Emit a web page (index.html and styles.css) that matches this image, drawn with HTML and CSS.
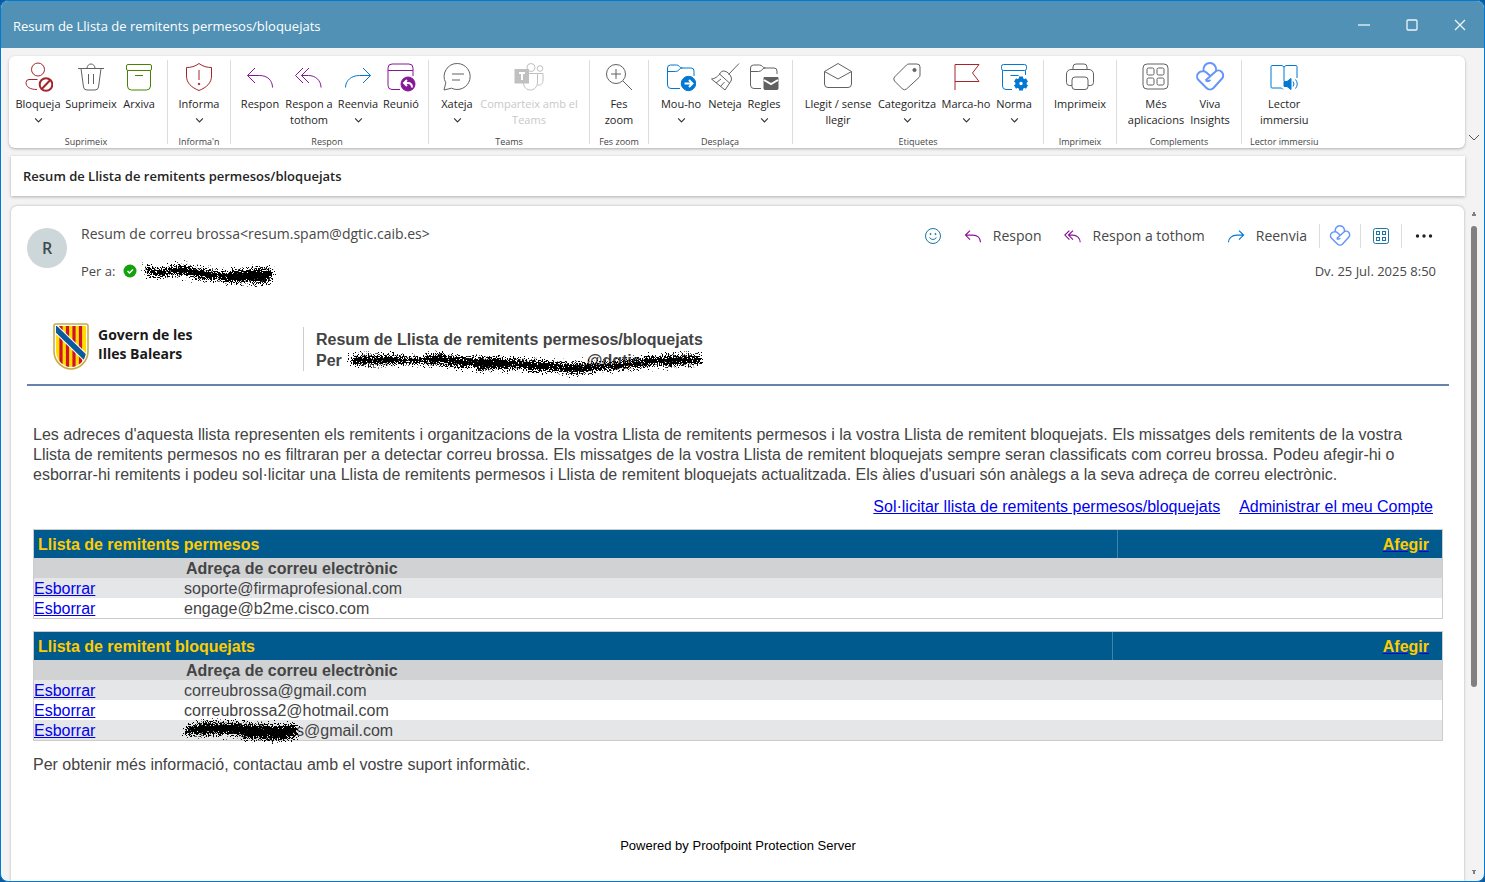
FILE: index.html
```html
<!DOCTYPE html>
<html lang="ca">
<head>
<meta charset="utf-8">
<title>Resum de Llista de remitents permesos/bloquejats</title>
<link rel="stylesheet" href="styles.css">
</head>
<body>
<svg class="defs" aria-hidden="true">
  <symbol id="chev" viewBox="0 0 8 6"><path d="M1 1.2l3 3 3-3"/></symbol>
  <symbol id="reply" viewBox="0 0 30 30"><path d="M10 6L2.500 13.500l7.500 7.500M2.500 13.500h12c8 0 13 5 13 12"/></symbol>
  <symbol id="replyall" viewBox="0 0 30 30"><path d="M9 6L1.500 13.500 9 21M15 6l-7.500 7.500L15 21M7.500 13.500h7c7 0 12.500 5 12.500 12"/></symbol>
  <symbol id="forward" viewBox="0 0 30 30"><path d="M20 6l7.500 7.500L20 21M27.500 13.500h-11c-8 0-14 5-14 12"/></symbol>
  <symbol id="viva" viewBox="0 0 30 30"><path d="M10.500 18.500L20 10a4.800 4.800 0 0 1 6.800 6.800L18.500 26a5 5 0 0 1-7 0L3.500 18a5 5 0 0 1 0-7Q5.500 8.800 9 9.300q1.500.3 3 1.700l3.500 3.300M8.800 9.300a6.300 6.300 0 1 1 12 0M10.500 18.500q2.500 1.500 5-.5"/></symbol>
  <symbol id="apps" viewBox="0 0 30 30"><rect x="2" y="2" width="25" height="25" rx="4"/><rect x="6" y="6" width="7" height="7" rx="1.500"/><rect x="16" y="6" width="7" height="7" rx="1.500"/><rect x="6" y="16" width="7" height="7" rx="1.500"/><rect x="16" y="16" width="7" height="7" rx="1.500"/></symbol>
  <filter id="speckle" x="-5%" y="-40%" width="110%" height="180%">
    <feTurbulence type="fractalNoise" baseFrequency="0.8" numOctaves="2" seed="4"/>
    <feDisplacementMap in="SourceGraphic" scale="18" xChannelSelector="R" yChannelSelector="G"/>
  </filter>
</svg>

<div class="window">
  <header class="titlebar">
    <span class="window-title">Resum de Llista de remitents permesos/bloquejats</span>
    <div class="window-controls">
      <button aria-label="Minimitza"><svg viewBox="0 0 12 12"><path d="M0 6h12"/></svg></button>
      <button aria-label="Maximitza"><svg viewBox="0 0 12 12"><rect x="1" y="1" width="10" height="10" rx="1"/></svg></button>
      <button aria-label="Tanca"><svg viewBox="0 0 12 12"><path d="M1 1l10 10M11 1L1 11"/></svg></button>
    </div>
  </header>

  <div class="ribbon-row">
    <nav class="ribbon">
      <section class="group">
        <div class="tools">
          <button class="w50"><svg class="ico red" viewBox="0 0 30 30"><circle cx="15" cy="7.500" r="6.500"/><path d="M14.500 17.500H6a3 3 0 0 0-3 3c0 4.500 4 7 11 7"/><g class="thick"><circle cx="23" cy="22.500" r="6.300"/><path d="M18.700 27l8.600-9"/></g></svg>Bloqueja<svg class="chev"><use href="#chev"/></svg></button>
          <button class="w56"><svg class="ico" viewBox="0 0 30 30"><path d="M2 6.500h26M11 6.500c0-6 8-6 8 0M5 6.500l2.500 18.500q.4 3 3.500 3h8q3 0 3.500-3L25 6.500M12.500 12v10M17.500 12v10"/></svg>Suprimeix</button>
          <button class="w40"><svg class="ico green" viewBox="0 0 30 30"><rect x="2.500" y="2.500" width="25" height="6" rx="1.500"/><path d="M3.500 8.500V24a4 4 0 0 0 4 4h15a4 4 0 0 0 4-4V8.500M11 13.500h8"/></svg>Arxiva</button>
        </div>
        <h2>Suprimeix</h2>
      </section>
      <section class="group">
        <div class="tools">
          <button class="w46"><svg class="ico red" viewBox="0 0 30 30"><path d="M15 1.500C11 4.500 7 5.500 2.500 5.500V14c0 7 5 11.500 12.500 14.500C22.500 25.500 27.500 21 27.500 14V5.500C23 5.500 19 4.500 15 1.500zM15 8v10"/><circle cx="15" cy="22" r=".8" class="fill"/></svg>Informa<svg class="chev"><use href="#chev"/></svg></button>
        </div>
        <h2>Informa'n</h2>
      </section>
      <section class="group respond">
        <div class="tools">
          <button class="w50"><svg class="ico purple"><use href="#reply"/></svg>Respon</button>
          <button class="w48"><svg class="ico purple"><use href="#replyall"/></svg>Respon a<br>tothom</button>
          <button class="w50"><svg class="ico blue"><use href="#forward"/></svg>Reenvia<svg class="chev"><use href="#chev"/></svg></button>
          <button class="w36"><svg class="ico purple" viewBox="0 0 30 30"><path d="M14 27.500H6a4 4 0 0 1-4-4V6a4 4 0 0 1 4-4h17a4 4 0 0 1 4 4v8M2 8.500h25"/><circle cx="22" cy="22" r="7" class="fill"/><path class="inv" d="M21 18l-3 3 3 3M18 21h4c3 0 4 2 4 4.500"/></svg>Reunió</button>
        </div>
        <h2>Respon</h2>
      </section>
      <section class="group">
        <div class="tools">
          <button class="w40"><svg class="ico" viewBox="0 0 30 30"><path d="M15.500 1.500a13 13 0 1 1-6 24.700L2 28l1.800-7.200A13 13 0 0 1 15.500 1.500zM10 12h12M10 18h8"/></svg>Xateja<svg class="chev"><use href="#chev"/></svg></button>
          <button class="w104" disabled><svg class="ico" viewBox="0 0 30 30"><circle cx="17" cy="5.500" r="4"/><circle cx="26" cy="6.500" r="2.800"/><path d="M15 11.500h8.500V20c0 5-3.500 8-7 8s-7-2.500-7-7M23.500 11.500h5.500V18c0 4-2.500 5.500-5.500 5"/><rect x="1" y="7.500" width="13.500" height="13.500" class="fill"/><path class="inv" d="M5 11h6M8 11v7"/></svg>Comparteix amb el<br>Teams</button>
        </div>
        <h2>Teams</h2>
      </section>
      <section class="group zoom">
        <div class="tools">
          <button class="w46"><svg class="ico" viewBox="0 0 30 30"><circle cx="12" cy="12" r="9.500"/><path d="M19 19l9 9M7 12h10M12 7v10"/></svg>Fes<br>zoom</button>
        </div>
        <h2>Fes zoom</h2>
      </section>
      <section class="group move">
        <div class="tools">
          <button class="w50"><svg class="ico blue" viewBox="0 0 30 30"><path d="M14 26.500H5a3.500 3.500 0 0 1-3.500-3.500V6A3 3 0 0 1 4.500 3h6c3 0 3 3 6 3H25a3 3 0 0 1 3 3v5M1.500 9.500h8c4 0 3-3.500 7-3.500"/><circle cx="22.500" cy="21.500" r="7.200" class="fill"/><path class="inv" d="M18.500 21.500h8M23 18l3.500 3.500L23 25"/></svg>Mou-ho<svg class="chev"><use href="#chev"/></svg></button>
          <button class="w38"><svg class="ico" viewBox="0 0 30 30"><path d="M29 1.500L18.500 12.500M11.500 9.500c4-2.500 12 4.500 9.500 9.500l-6 9L1.500 17c5-.5 7.500-4 10-7.500zM9 11.500L19.500 21M6 21l5-4M10.500 24.500l4-4.500"/></svg>Neteja</button>
          <button class="w40"><svg class="ico" viewBox="0 0 30 30"><path d="M12 26.500H5a3.500 3.500 0 0 1-3.500-3.500V6A3 3 0 0 1 4.500 3h6c3 0 3 3 6 3H25a3 3 0 0 1 3 3v3M1.500 9.500h8c4 0 3-3.500 7-3.500"/><path class="fill" d="M15 15.500h14v11a1 1 0 0 1-1 1H16a1 1 0 0 1-1-1z"/><path class="inv" d="M15 18l7 4 7-4"/></svg>Regles<svg class="chev"><use href="#chev"/></svg></button>
        </div>
        <h2>Desplaça</h2>
      </section>
      <section class="group">
        <div class="tools">
          <button class="w74"><svg class="ico" viewBox="0 0 30 30"><path d="M1.500 9.500L15 1.500l13.500 8V22a3.500 3.500 0 0 1-3.500 3.500H5A3.500 3.500 0 0 1 1.500 22zM1.500 9.500L15 17l13.500-7.500"/></svg>Llegit / sense<br>llegir</button>
          <button class="w64"><svg class="ico" viewBox="0 0 30 30"><path d="M17 2h8a3 3 0 0 1 3 3v8q0 1.500-1 2.500L14.500 27q-2 1.500-4 0l-8-8q-1.500-2 0-4L14.500 3Q15.500 2 17 2z"/><circle cx="22.500" cy="8" r="1.600" class="fill"/></svg>Categoritza<svg class="chev"><use href="#chev"/></svg></button>
          <button class="w54"><svg class="ico red" viewBox="0 0 30 30"><path d="M4 28V2.500h24L21.500 11l6.500 8.500H4"/></svg>Marca-ho<svg class="chev"><use href="#chev"/></svg></button>
          <button class="w42"><svg class="ico blue" viewBox="0 0 30 30"><rect x="2.500" y="2.500" width="25" height="6" rx="2"/><path d="M3.500 8.500V24a3.500 3.500 0 0 0 3.500 3.500h6M26.500 8.500V13M11.500 13.500h8"/><circle cx="22" cy="21.500" r="3.700" class="cog"/><path class="teeth" d="M22 14.500v2.500M22 26v2.500M16 18l2.500 1.500M25.500 23.500l2.500 1.500M16 25l2.500-1.500M25.500 19.500l2.500-1.500"/></svg>Norma<svg class="chev"><use href="#chev"/></svg></button>
        </div>
        <h2>Etiquetes</h2>
      </section>
      <section class="group">
        <div class="tools">
          <button class="w56"><svg class="ico" viewBox="0 0 30 30"><path d="M8 7.500V5a3 3 0 0 1 3-3h8a3 3 0 0 1 3 3v2.500M7 23.500H4.500a3 3 0 0 1-3-3V12A4.500 4.500 0 0 1 6 7.500h18a4.500 4.500 0 0 1 4.500 4.500v8.500a3 3 0 0 1-3 3H23"/><rect x="7" y="15" width="16" height="12.500" rx="3"/></svg>Imprimeix</button>
        </div>
        <h2>Imprimeix</h2>
      </section>
      <section class="group">
        <div class="tools">
          <button class="w62"><svg class="ico"><use href="#apps"/></svg>Més<br>aplicacions</button>
          <button class="w46"><svg class="ico viva"><use href="#viva"/></svg>Viva<br>Insights</button>
        </div>
        <h2>Complements</h2>
      </section>
      <section class="group">
        <div class="tools">
          <button class="w54"><svg class="ico blue" viewBox="0 0 30 30"><path d="M14 27.500l-1.500-1.500H3a1 1 0 0 1-1-1V4.500a1 1 0 0 1 1-1h10L15 5l2-1.500h10a1 1 0 0 1 1 1V16M15 5v14"/><path class="fill" d="M15 19.500h3l4-3v11l-4-3h-3z"/><path d="M24 19.500q2 2.500 0 5M26.500 17.500q3.500 4.500 0 9"/></svg>Lector<br>immersiu</button>
        </div>
        <h2>Lector immersiu</h2>
      </section>
    </nav>
    <button class="collapse" aria-label="Redueix la cinta"><svg viewBox="0 0 12 8"><path d="M1 1l5 5 5-5"/></svg></button>
  </div>

  <h1 class="subject">Resum de Llista de remitents permesos/bloquejats</h1>

  <div class="content">
    <main class="message">
      <div class="msg-head">
        <div class="avatar">R</div>
        <div class="people">
          <p>Resum de correu brossa&lt;resum.spam@dgtic.caib.es&gt;</p>
          <p class="to">Per a: <svg class="ok" viewBox="0 0 14 14"><circle cx="7" cy="7" r="6.500"/><path d="M4.500 7l2 2 3.500-3.500"/></svg><svg class="scribble s-to" viewBox="0 0 138 24"><path d="M5 10l16 4 20-5 25 5 22 3 30-5 14 1M8 14l30-2 30 6 30-1 32-1M30 11l20 3 40 6 40 1M90 14l42 2"/></svg></p>
        </div>
        <div class="msg-side">
          <div class="actions">
            <button aria-label="Reacciona"><svg class="sm teal" viewBox="0 0 18 18"><circle cx="9" cy="9" r="7.500"/><path d="M5.500 10.500q3.500 4 7 0"/><circle cx="6.500" cy="7" r=".6" class="fill"/><circle cx="11.500" cy="7" r=".6" class="fill"/></svg></button>
            <button><svg class="sm purple"><use href="#reply"/></svg>Respon</button>
            <button><svg class="sm purple"><use href="#replyall"/></svg>Respon a tothom</button>
            <button><svg class="sm blue"><use href="#forward"/></svg>Reenvia</button>
            <div class="extras">
              <button aria-label="Viva Insights"><svg class="md viva"><use href="#viva"/></svg></button>
              <button aria-label="Aplicacions"><svg class="sm teal" viewBox="0 0 18 18"><rect x="1.500" y="1.500" width="15" height="15" rx="2"/><rect x="4.500" y="4.500" width="3" height="3"/><rect x="10.500" y="4.500" width="3" height="3"/><rect x="4.500" y="10.500" width="3" height="3"/><rect x="10.500" y="10.500" width="3" height="3"/></svg></button>
              <button aria-label="Més accions"><svg class="sm dots" viewBox="0 0 18 18"><circle cx="2.500" cy="9" r="1.700"/><circle cx="9" cy="9" r="1.700"/><circle cx="15.500" cy="9" r="1.700"/></svg></button>
            </div>
          </div>
          <time>Dv. 25 Jul. 2025 8:50</time>
        </div>
      </div>

      <div class="brand">
        <div class="logo">
          <svg class="shield" viewBox="0 0 36 47"><path fill="#fff" stroke="#c9ab45" stroke-width="1.600" d="M3 1h30q2 0 2 2v25c0 11-9 18-17 18S1 39 1 28V3q0-2 2-2z"/><clipPath id="sh"><path d="M3 3h30v25c0 10-8 16-15 16S3 38 3 28z"/></clipPath><g clip-path="url(#sh)"><path fill="#fd0" d="M3 3h30v42H3z"/><path stroke="#d0122d" stroke-width="3.200" d="M8 3v42M14.500 3v42M21 3v42M27.500 3v42"/><path stroke="#fff" stroke-width="7.500" d="M1 4l34 33"/><path stroke="#0a5a9c" stroke-width="5.500" d="M1 4l34 33"/></g></svg>
          <span>Govern de les<br>Illes Balears</span>
        </div>
        <div class="headline">
          <div>Resum de Llista de remitents permesos/bloquejats</div>
          <div class="per">Per <span class="hidden-name"><span>@dgtic</span><svg class="scribble s-per" viewBox="0 0 360 24"><path d="M5 9l40-1 20 3 30-4 26 6 30-2M6 12l50-1M78 8l40 2M78 11l40 2M108 14l60-2 50 4 45 1 36-3 20-5 36-1M110 10l50 1M130 17l70-3M170 12l60 9 40-6 60-7M180 18l60 0M300 10l55 1M315 13l36-2"/></svg></span></div>
        </div>
      </div>

      <div class="mail">
        <p>Les adreces d'aquesta llista representen els remitents i organitzacions de la vostra Llista de remitents permesos i la vostra Llista de remitent bloquejats. Els missatges dels remitents de la vostra Llista de remitents permesos no es filtraran per a detectar correu brossa. Els missatges de la vostra Llista de remitent bloquejats sempre seran classificats com correu brossa. Podeu afegir-hi o esborrar-hi remitents i podeu sol·licitar una Llista de remitents permesos i Llista de remitent bloquejats actualitzada. Els àlies d'usuari són anàlegs a la seva adreça de correu electrònic.</p>
        <div class="links"><a href="#">Sol·licitar llista de remitents permesos/bloquejats</a><a href="#">Administrar el meu Compte</a></div>

        <table class="list">
          <colgroup><col class="c-act"><col><col class="c-add"></colgroup>
          <thead>
            <tr class="cap"><th colspan="2">Llista de remitents permesos</th><th class="add"><a href="#">Afegir</a></th></tr>
            <tr class="cols"><th></th><th colspan="2">Adreça de correu electrònic</th></tr>
          </thead>
          <tbody>
            <tr><td><a href="#">Esborrar</a></td><td colspan="2">soporte@firmaprofesional.com</td></tr>
            <tr><td><a href="#">Esborrar</a></td><td colspan="2">engage@b2me.cisco.com</td></tr>
          </tbody>
        </table>

        <table class="list">
          <colgroup><col class="c-act"><col><col class="c-add wide"></colgroup>
          <thead>
            <tr class="cap"><th colspan="2">Llista de remitent bloquejats</th><th class="add"><a href="#">Afegir</a></th></tr>
            <tr class="cols"><th></th><th colspan="2">Adreça de correu electrònic</th></tr>
          </thead>
          <tbody>
            <tr><td><a href="#">Esborrar</a></td><td colspan="2">correubrossa@gmail.com</td></tr>
            <tr><td><a href="#">Esborrar</a></td><td colspan="2">correubrossa2@hotmail.com</td></tr>
            <tr><td><a href="#">Esborrar</a></td><td colspan="2"><span class="masked">s@gmail.com<svg class="scribble s-row" viewBox="0 0 122 24"><path d="M6 12l20-5 30 1 30 2 30 0M4 14l30-1 40 2 42-1M16 9l40 2 30 6 28 0M60 18l46 1M8 12l106 1"/></svg></span></td></tr>
          </tbody>
        </table>
        <p class="note">Per obtenir més informació, contactau amb el vostre suport informàtic.</p>
      </div>
      <footer>Powered by Proofpoint Protection Server</footer>
    </main>
    <div class="scroll" aria-hidden="true">
      <svg viewBox="0 0 6 4"><path d="M2 0h2v2h1v2H1V2h1z"/></svg>
      <div class="track"><div class="thumb"></div></div>
      <svg viewBox="0 0 6 4"><path d="M1 0h4v1H4v3H2V1H1z"/></svg>
    </div>
  </div>
</div>
</body>
</html>
```
FILE: styles.css
```css
* { box-sizing: border-box; }
body { margin: 0; background: #0a5c9e; font-family: "Open Sans", "Noto Sans", sans-serif; color: #242424; }
h1, h2, p { margin: 0; font-weight: 400; }
button { font: inherit; color: inherit; background: none; border: 0; padding: 0; }
svg { fill: none; display: block; }
.defs { position: absolute; width: 0; height: 0; }

.window { min-height: 100vh; display: flex; flex-direction: column; background: #f3f3f3; border: 1px solid #0078d4; border-radius: 8px; overflow: hidden; }
.titlebar { height: 47px; display: flex; align-items: center; justify-content: space-between; background: #5191b5; color: #fff; padding: 0 18px 0 12px; }
.window-title { font-size: 13px; font-weight: 500; padding-top: 2px; }
.window-controls { display: flex; gap: 36px; }
.window-controls svg { width: 12px; height: 12px; stroke: #fff; stroke-width: 1.300; opacity: .9; }

.ribbon-row { display: flex; padding: 8px 0 0 8px; }
.ribbon { flex: 1; display: flex; height: 92px; background: #fff; border-radius: 6px; box-shadow: 0 1px 3px rgba(0,0,0,.28); }
.group { display: flex; flex-direction: column; align-items: center; justify-content: space-between; padding: 2px 8px 0; border-right: 1px solid #dcdcdc; margin: 4px 0; }
.group:first-child { padding-left: 4px; }
.group.respond { padding: 2px 9px 0 4px; }
.group.zoom { padding: 2px 6px 0; }
.group.move { padding-left: 7px; }
.group:last-child { border: 0; }
.tools { display: flex; }
.tools button { display: flex; flex-direction: column; align-items: center; font-size: 11px; line-height: 16px; white-space: nowrap; }
.tools button:disabled { color: #c8c8c8; }
.group h2 { font-size: 9px; line-height: 12px; margin-bottom: -4px; white-space: nowrap; color: #444; }
.w36 { width: 36px; } .w38 { width: 38px; } .w40 { width: 40px; } .w42 { width: 42px; }
.w46 { width: 46px; } .w48 { width: 48px; } .w50 { width: 50px; } .w54 { width: 54px; } .w56 { width: 56px; }
.w62 { width: 62px; } .w64 { width: 64px; } .w74 { width: 74px; } .w104 { width: 104px; }
.ico { width: 30px; height: 30px; margin-bottom: 4px; color: #616161; stroke: currentColor; }
.ico .fill, .sm .fill { fill: currentColor; }
.ico .inv { stroke: #fff; stroke-width: 2; fill: none; }
.ico .thick { stroke-width: 2; }
.ico .cog, .ico .teeth { stroke-width: 4; }
button:disabled .ico { color: #c0c0c0; }
.ico.red { color: #a4262c; }
.ico.green { color: #498205; }
.purple, .ico.purple { color: #881798; stroke: currentColor; }
.blue, .ico.blue { color: #0078d4; stroke: currentColor; }
.viva, .ico.viva { color: #6495fa; stroke: currentColor; stroke-width: 2; }
.teal { color: #1a76a5; stroke: currentColor; }
.chev { width: 9px; height: 7px; margin-top: 5px; stroke: #333; }
.collapse { width: 19px; align-self: flex-end; padding: 0 0 6px 3px; }
.collapse svg { width: 12px; height: 8px; stroke: #555; }

.subject { margin: 8px 19px 0 10px; padding: 1px 12px 0; background: #fff; font-size: 13px; font-weight: 600; line-height: 39px; box-shadow: 0 1px 3px rgba(0,0,0,.28); }
.content { flex: 1; display: flex; padding: 10px 0 0 10px; }
.message { flex: 1; min-width: 0; background: #fff; border-radius: 6px 6px 0 0; box-shadow: 0 0 3px rgba(0,0,0,.28); padding: 0 15px 0 16px; }
.scroll { width: 20px; display: flex; flex-direction: column; align-items: center; padding: 6px 0 7px; }
.scroll svg { width: 6px; height: 4px; fill: #808080; }
.track { flex: 1; margin: 10px 0 4px; }
.thumb { width: 6px; height: 72%; border-radius: 3px; background: #808080; }

.msg-head { display: flex; padding-top: 18px; color: #484848; font-size: 14px; line-height: 20px; }
.avatar { width: 40px; height: 40px; margin-top: 4px; border-radius: 50%; background: #cdd6d9; color: #3b4a50; font-size: 16px; font-weight: 600; line-height: 40px; text-align: center; }
.people { flex: 1; margin-left: 14px; }
.to { display: flex; align-items: center; margin-top: 17px; height: 20px; font-size: 13px; }
.ok { width: 14px; height: 14px; margin: 0 3px 0 8px; }
.ok circle { fill: #13a10e; }
.ok path { stroke: #fff; stroke-width: 1.500; }
.msg-side { display: flex; flex-direction: column; align-items: flex-end; gap: 13px; padding-right: 13px; }
.actions { display: flex; align-items: center; height: 24px; gap: 22px; margin-right: -10px; }
.actions button { display: flex; align-items: center; gap: 11px; }
.sm { width: 18px; height: 18px; }
.sm use { stroke-width: 2; }
.md { width: 22px; height: 22px; }
.extras { display: flex; margin-left: -10px; }
.extras button { height: 24px; width: 41px; justify-content: center; border-left: 1px solid #ddd; }
.extras button:last-child { width: 45px; }
.dots { fill: #222; }
time { font-size: 13px; }

.scribble { filter: url(#speckle); stroke: #000; stroke-width: 6; }
.s-to { width: 138px; height: 24px; }
.brand { display: flex; align-items: flex-start; margin-top: 32px; padding: 10px 0 13px 26px; border-bottom: 2px solid #6683ad; }
.logo { display: flex; align-items: flex-start; gap: 9px; width: 250px; color: #1a1a1a; font-size: 14px; font-weight: 700; line-height: 19px; }
.logo span { padding-top: 2px; }
.shield { width: 36px; height: 47px; }
.headline { border-left: 1px solid #ccc; margin-top: 4px; padding: 2px 0 0 12px; font: bold 16px/21px "Liberation Sans", Arial, sans-serif; color: #444; }
.per { display: flex; gap: 4px; }
.hidden-name { position: relative; width: 360px; padding-left: 241px; }
.s-per { position: absolute; left: 0; top: 0; width: 360px; height: 24px; }

.mail { padding: 39px 6px 0; font: 16px/20px "Liberation Sans", Arial, sans-serif; color: #444; }
.mail a { color: #00e; }
.links { display: flex; justify-content: flex-end; gap: 19px; margin: 12px 10px 12px 0; }
.list { width: 100%; table-layout: fixed; border: 1px solid #ccc; border-spacing: 0; margin-bottom: 12px; }
.list th, .list td { padding: 2px 0 0; line-height: 18px; text-align: left; }
.c-act { width: 150px; }
.c-add { width: 325px; }
.c-add.wide { width: 330px; }
.list .cap th { height: 28px; padding: 2px 4px 0; background: #005a8e; color: #fc0; }
.list .cap .add { text-align: right; padding-right: 13px; border-left: 1px solid #3f81a8; }
.list .add a { color: #fc0; text-decoration-color: #00e; }
.list .cols th { height: 20px; background: #d1d2d4; padding-left: 2px; }
.list tbody tr:nth-child(odd) { background: #e5e6e8; }
.masked { position: relative; padding-left: 112px; }
.s-row { position: absolute; left: -3px; top: -4px; width: 122px; height: 24px; }
.note { padding-top: 2px; }
footer { padding: 61px 0 24px; font: 13px/20px "Liberation Sans", Arial, sans-serif; color: #000; text-align: center; }
```
